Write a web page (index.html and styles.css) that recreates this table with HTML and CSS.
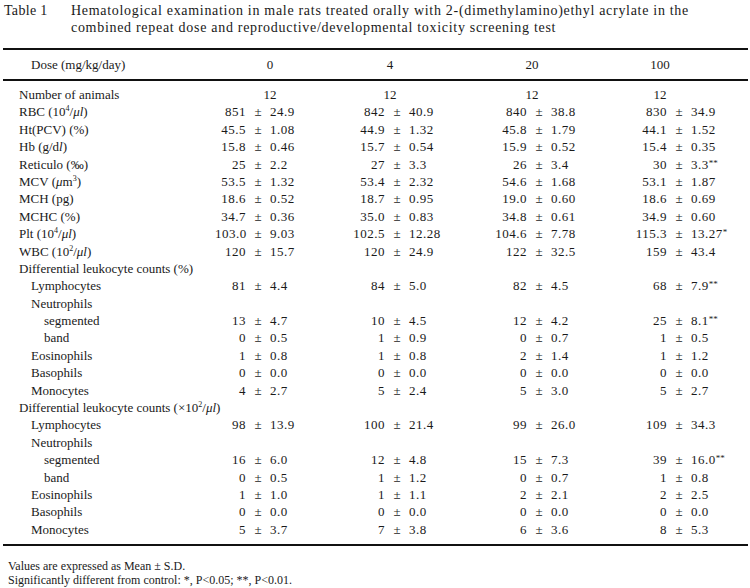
FILE: index.html
```html
<!DOCTYPE html>
<html lang="en">
<head>
<meta charset="utf-8">
<title>Table 1</title>
<link rel="stylesheet" href="styles.css">
</head>
<body>
<div class="page">
  <div class="caption">
    <div class="cap-label">Table 1</div>
    <div class="cap-text">Hematological examination in male rats treated orally with 2-(dimethylamino)ethyl acrylate in the combined repeat dose and reproductive/developmental toxicity screening test</div>
  </div>

  <div class="table">
    <div class="head">
      <div class="h-label">Dose (mg/kg/day)</div>
      <div class="h-dose">0</div>
      <div class="h-dose">4</div>
      <div class="h-dose">20</div>
      <div class="h-dose">100</div>
    </div>

    <div class="body">
      <div class="row count"><div class="lab">Number of animals</div><div class="n">12</div><div class="n">12</div><div class="n">12</div><div class="n">12</div></div>
      <div class="row"><div class="lab">RBC (10<sup>4</sup>/<i>μl</i>)</div><span class="m">851</span><span class="pm">±</span><span class="sd">24.9</span><span class="m">842</span><span class="pm">±</span><span class="sd">40.9</span><span class="m">840</span><span class="pm">±</span><span class="sd">38.8</span><span class="m">830</span><span class="pm">±</span><span class="sd">34.9</span></div>
      <div class="row"><div class="lab">Ht(PCV) (%)</div><span class="m">45.5</span><span class="pm">±</span><span class="sd">1.08</span><span class="m">44.9</span><span class="pm">±</span><span class="sd">1.32</span><span class="m">45.8</span><span class="pm">±</span><span class="sd">1.79</span><span class="m">44.1</span><span class="pm">±</span><span class="sd">1.52</span></div>
      <div class="row"><div class="lab">Hb (g/d<i>l</i>)</div><span class="m">15.8</span><span class="pm">±</span><span class="sd">0.46</span><span class="m">15.7</span><span class="pm">±</span><span class="sd">0.54</span><span class="m">15.9</span><span class="pm">±</span><span class="sd">0.52</span><span class="m">15.4</span><span class="pm">±</span><span class="sd">0.35</span></div>
      <div class="row"><div class="lab">Reticulo (‰)</div><span class="m">25</span><span class="pm">±</span><span class="sd">2.2</span><span class="m">27</span><span class="pm">±</span><span class="sd">3.3</span><span class="m">26</span><span class="pm">±</span><span class="sd">3.4</span><span class="m">30</span><span class="pm">±</span><span class="sd">3.3<sup class="sig">**</sup></span></div>
      <div class="row"><div class="lab">MCV (<i>μ</i>m<sup>3</sup>)</div><span class="m">53.5</span><span class="pm">±</span><span class="sd">1.32</span><span class="m">53.4</span><span class="pm">±</span><span class="sd">2.32</span><span class="m">54.6</span><span class="pm">±</span><span class="sd">1.68</span><span class="m">53.1</span><span class="pm">±</span><span class="sd">1.87</span></div>
      <div class="row"><div class="lab">MCH (pg)</div><span class="m">18.6</span><span class="pm">±</span><span class="sd">0.52</span><span class="m">18.7</span><span class="pm">±</span><span class="sd">0.95</span><span class="m">19.0</span><span class="pm">±</span><span class="sd">0.60</span><span class="m">18.6</span><span class="pm">±</span><span class="sd">0.69</span></div>
      <div class="row"><div class="lab">MCHC (%)</div><span class="m">34.7</span><span class="pm">±</span><span class="sd">0.36</span><span class="m">35.0</span><span class="pm">±</span><span class="sd">0.83</span><span class="m">34.8</span><span class="pm">±</span><span class="sd">0.61</span><span class="m">34.9</span><span class="pm">±</span><span class="sd">0.60</span></div>
      <div class="row"><div class="lab">Plt (10<sup>4</sup>/<i>μl</i>)</div><span class="m">103.0</span><span class="pm">±</span><span class="sd">9.03</span><span class="m">102.5</span><span class="pm">±</span><span class="sd">12.28</span><span class="m">104.6</span><span class="pm">±</span><span class="sd">7.78</span><span class="m">115.3</span><span class="pm">±</span><span class="sd">13.27<sup class="sig">*</sup></span></div>
      <div class="row"><div class="lab">WBC (10<sup>2</sup>/<i>μl</i>)</div><span class="m">120</span><span class="pm">±</span><span class="sd">15.7</span><span class="m">120</span><span class="pm">±</span><span class="sd">24.9</span><span class="m">122</span><span class="pm">±</span><span class="sd">32.5</span><span class="m">159</span><span class="pm">±</span><span class="sd">43.4</span></div>
      <div class="row"><div class="lab wide">Differential leukocyte counts (%)</div></div>
      <div class="row"><div class="lab l1">Lymphocytes</div><span class="m">81</span><span class="pm">±</span><span class="sd">4.4</span><span class="m">84</span><span class="pm">±</span><span class="sd">5.0</span><span class="m">82</span><span class="pm">±</span><span class="sd">4.5</span><span class="m">68</span><span class="pm">±</span><span class="sd">7.9<sup class="sig">**</sup></span></div>
      <div class="row"><div class="lab l1">Neutrophils</div></div>
      <div class="row"><div class="lab l2">segmented</div><span class="m">13</span><span class="pm">±</span><span class="sd">4.7</span><span class="m">10</span><span class="pm">±</span><span class="sd">4.5</span><span class="m">12</span><span class="pm">±</span><span class="sd">4.2</span><span class="m">25</span><span class="pm">±</span><span class="sd">8.1<sup class="sig">**</sup></span></div>
      <div class="row"><div class="lab l2">band</div><span class="m">0</span><span class="pm">±</span><span class="sd">0.5</span><span class="m">1</span><span class="pm">±</span><span class="sd">0.9</span><span class="m">0</span><span class="pm">±</span><span class="sd">0.7</span><span class="m">1</span><span class="pm">±</span><span class="sd">0.5</span></div>
      <div class="row"><div class="lab l1">Eosinophils</div><span class="m">1</span><span class="pm">±</span><span class="sd">0.8</span><span class="m">1</span><span class="pm">±</span><span class="sd">0.8</span><span class="m">2</span><span class="pm">±</span><span class="sd">1.4</span><span class="m">1</span><span class="pm">±</span><span class="sd">1.2</span></div>
      <div class="row"><div class="lab l1">Basophils</div><span class="m">0</span><span class="pm">±</span><span class="sd">0.0</span><span class="m">0</span><span class="pm">±</span><span class="sd">0.0</span><span class="m">0</span><span class="pm">±</span><span class="sd">0.0</span><span class="m">0</span><span class="pm">±</span><span class="sd">0.0</span></div>
      <div class="row"><div class="lab l1">Monocytes</div><span class="m">4</span><span class="pm">±</span><span class="sd">2.7</span><span class="m">5</span><span class="pm">±</span><span class="sd">2.4</span><span class="m">5</span><span class="pm">±</span><span class="sd">3.0</span><span class="m">5</span><span class="pm">±</span><span class="sd">2.7</span></div>
      <div class="row"><div class="lab wide">Differential leukocyte counts (×10<sup>2</sup>/<i>μl</i>)</div></div>
      <div class="row"><div class="lab l1">Lymphocytes</div><span class="m">98</span><span class="pm">±</span><span class="sd">13.9</span><span class="m">100</span><span class="pm">±</span><span class="sd">21.4</span><span class="m">99</span><span class="pm">±</span><span class="sd">26.0</span><span class="m">109</span><span class="pm">±</span><span class="sd">34.3</span></div>
      <div class="row"><div class="lab l1">Neutrophils</div></div>
      <div class="row"><div class="lab l2">segmented</div><span class="m">16</span><span class="pm">±</span><span class="sd">6.0</span><span class="m">12</span><span class="pm">±</span><span class="sd">4.8</span><span class="m">15</span><span class="pm">±</span><span class="sd">7.3</span><span class="m">39</span><span class="pm">±</span><span class="sd">16.0<sup class="sig">**</sup></span></div>
      <div class="row"><div class="lab l2">band</div><span class="m">0</span><span class="pm">±</span><span class="sd">0.5</span><span class="m">1</span><span class="pm">±</span><span class="sd">1.2</span><span class="m">0</span><span class="pm">±</span><span class="sd">0.7</span><span class="m">1</span><span class="pm">±</span><span class="sd">0.8</span></div>
      <div class="row"><div class="lab l1">Eosinophils</div><span class="m">1</span><span class="pm">±</span><span class="sd">1.0</span><span class="m">1</span><span class="pm">±</span><span class="sd">1.1</span><span class="m">2</span><span class="pm">±</span><span class="sd">2.1</span><span class="m">2</span><span class="pm">±</span><span class="sd">2.5</span></div>
      <div class="row"><div class="lab l1">Basophils</div><span class="m">0</span><span class="pm">±</span><span class="sd">0.0</span><span class="m">0</span><span class="pm">±</span><span class="sd">0.0</span><span class="m">0</span><span class="pm">±</span><span class="sd">0.0</span><span class="m">0</span><span class="pm">±</span><span class="sd">0.0</span></div>
      <div class="row"><div class="lab l1">Monocytes</div><span class="m">5</span><span class="pm">±</span><span class="sd">3.7</span><span class="m">7</span><span class="pm">±</span><span class="sd">3.8</span><span class="m">6</span><span class="pm">±</span><span class="sd">3.6</span><span class="m">8</span><span class="pm">±</span><span class="sd">5.3</span></div>
    </div>
  </div>

  <div class="notes">
    <p>Values are expressed as Mean ± S.D.</p>
    <p>Significantly different from control: *, P&lt;0.05; **, P&lt;0.01.</p>
  </div>
</div>
</body>
</html>
```

FILE: styles.css
```css
html, body {
  margin: 0;
  padding: 0;
  background: #ffffff;
}

body {
  font-family: "Liberation Serif", "Times New Roman", serif;
  color: #1a1a1a;
}

.page {
  width: 750px;
}

.caption {
  display: flex;
  padding: 2px 4px 0 4px;
  font-size: 14px;
  line-height: 17px;
  letter-spacing: 0.7px;
}

.cap-label {
  flex: 0 0 67px;
  letter-spacing: 0.3px;
}

.cap-text {
  flex: 1;
  padding-right: 40px;
}

.table {
  margin: 12px 2px 0 3px;
  border-top: 2px solid #111;
  border-bottom: 2px solid #111;
  font-size: 13px;
}

.head {
  display: grid;
  grid-template-columns: 207px 120px 120px 164px 92px 1fr;
  align-items: center;
  height: 29px;
  border-bottom: 2px solid #111;
}

.h-label {
  padding-left: 28px;
}

.h-dose {
  text-align: center;
}

.body {
  padding: 5px 0 6px 0;
}

.row {
  display: grid;
  grid-template-columns: 212px 31px 24px 75px 40px 24px 76px 42px 24px 74px 42px 24px 1fr;
  height: 17.4px;
  line-height: 17.4px;
  white-space: nowrap;
}

.row.count {
  grid-template-columns: 207px 120px 120px 164px 92px 1fr;
}

.lab {
  padding-left: 16px;
}

.lab.wide {
  grid-column: 1 / -1;
}

.lab.l1 {
  padding-left: 28px;
}

.lab.l2 {
  padding-left: 41px;
}

.n {
  text-align: center;
}

.m,
.sd {
  letter-spacing: 0.5px;
}

.m {
  text-align: right;
}

.pm {
  text-align: center;
}

.sd {
  text-align: left;
}

sup {
  font-size: 8px;
  line-height: 0;
  vertical-align: 5px;
  letter-spacing: 0;
}

sup.sig {
  font-size: 9px;
  vertical-align: 3px;
}

i {
  font-style: italic;
}

.notes {
  padding: 13px 0 0 8px;
  font-size: 12px;
  line-height: 14px;
}

.notes p {
  margin: 0;
}
```
